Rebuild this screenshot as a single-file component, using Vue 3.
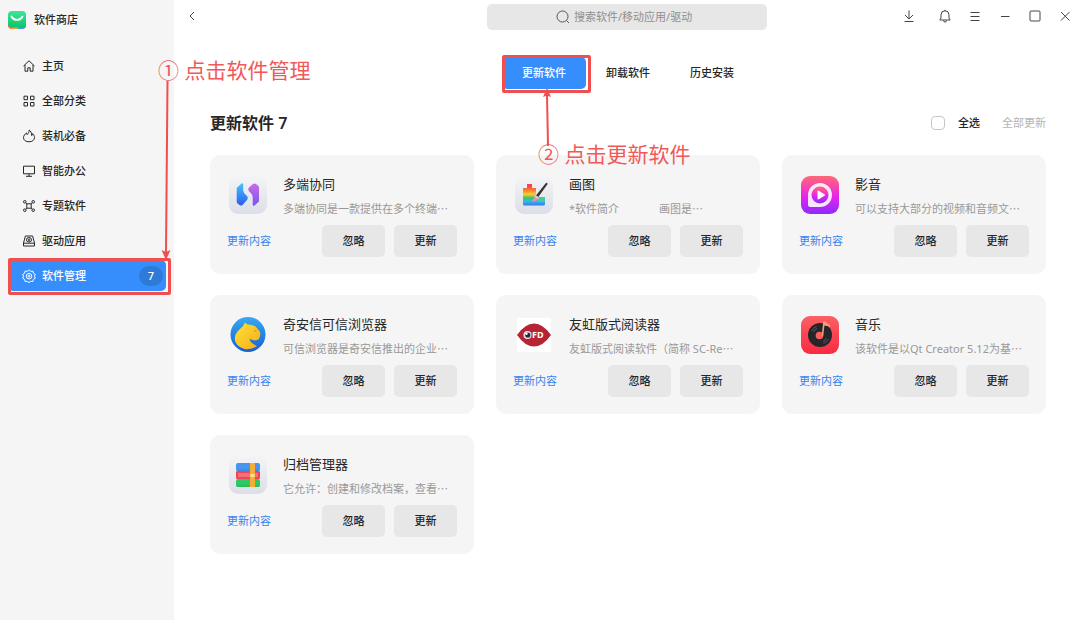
<script setup>
import { ref } from 'vue'

const menu = [
  { name: '主页', icon: 'M1.5 7 7 1.8 12.5 7M3 6v6.2h2.8V8.8h2.4v3.4H11V6' },
  {
    name: '全部分类',
    icon: 'M2 2.2h3.5v3.5H2zM8.5 2.2H12v3.5H8.5zM2 8.5h3.5V12H2zM8.5 8.5H12V12H8.5z'
  },
  {
    name: '装机必备',
    icon: 'M7.2 1c.2 2-1 3.200-2 4.600-.5-.4-.7-1-.6-1.700C2.800 5.200 1.500 6.800 1.500 8.600c0 2.600 2.400 4.200 5.500 4.200s5.500-1.600 5.500-4.200c0-1.700-.8-3-1.800-4-.1.900-.4 1.500-1 2C9.600 4.200 9 2.200 7.200 1z'
  },
  { name: '智能办公', icon: 'M1.500 2.200h11v7.600h-11zM7 9.800v2.400M4 12.300h6' },
  {
    name: '专题软件',
    icon: 'M4.800 4.800h4.400v4.400H4.800zM4.800 4.800l-1-1M9.200 4.800l1-1M4.800 9.200l-1 1M9.200 9.200l1 1M4.100 2.800a1.300 1.300 0 1 1-2.600 0 1.300 1.300 0 0 1 2.600 0M12.500 2.800a1.300 1.300 0 1 1-2.600 0 1.300 1.300 0 0 1 2.600 0M4.100 11.200a1.300 1.300 0 1 1-2.600 0 1.300 1.300 0 0 1 2.600 0M12.500 11.200a1.300 1.300 0 1 1-2.600 0 1.300 1.300 0 0 1 2.600 0'
  },
  {
    name: '驱动应用',
    icon: 'M3.400 2h7.200l1.900 7v3h-11V9zM1.500 9.200h11M9.600 5.800a2.600 2.200 0 1 1-5.200 0 2.600 2.200 0 0 1 5.200 0M7.800 5.800a.8.800 0 1 1-1.600 0 .8.800 0 0 1 1.600 0'
  },
  {
    name: '软件管理',
    icon: 'M7 .8l1.700 1.500 2.200-.2.500 2.100 1.900 1.200L12.500 7.200l.8 2-1.900 1.200-.5 2.100-2.200-.2L7 13.700l-1.700-1.400-2.200.2-.5-2.100L.7 9.200l.8-2-.8-1.800 1.900-1.200.5-2.100 2.200.2zM9.800 7.200a2.800 2.800 0 1 1-5.600 0 2.800 2.800 0 0 1 5.600 0M8 7.200a1 1 0 1 1-2 0 1 1 0 0 1 2 0'
  }
]

const tabs = ['更新软件', '卸载软件', '历史安装']

const apps = [
  { id: 'link', name: '多端协同', desc: '多端协同是一款提供在多个终端' },
  { id: 'paint', name: '画图', desc: '*软件简介              画图是' },
  { id: 'video', name: '影音', desc: '可以支持大部分的视频和音频文' },
  { id: 'browser', name: '奇安信可信浏览器', desc: '可信浏览器是奇安信推出的企业' },
  { id: 'ofd', name: '友虹版式阅读器', desc: '友虹版式阅读软件（简称 SC-Re' },
  { id: 'music', name: '音乐', desc: '该软件是以Qt Creator 5.12为基' },
  { id: 'archive', name: '归档管理器', desc: '它允许：创建和修改档案，查看' }
]

const activeMenu = ref('软件管理')
const activeTab = ref('更新软件')
const keyword = ref('')
const selectAll = ref(false)
</script>

<template>
  <div class="store" lang="zh-CN">
    <aside class="sidebar">
      <div class="brand">
        <svg width="18" height="18" viewBox="0 0 18 18">
          <defs>
            <linearGradient id="bag" x1="0" y1="0" x2="0" y2="1">
              <stop offset="0" stop-color="#3ce69a" />
              <stop offset="1" stop-color="#0cc566" />
            </linearGradient>
            <linearGradient id="rim">
              <stop offset="0" stop-color="#f0564a" />
              <stop offset=".4" stop-color="#f5b52e" />
              <stop offset=".65" stop-color="#38a5f2" />
              <stop offset="1" stop-color="#7a62d8" />
            </linearGradient>
          </defs>
          <rect y="4" width="18" height="14" rx="4" fill="url(#rim)" />
          <rect width="18" height="16.500" rx="4" fill="url(#bag)" />
          <path d="M3.500 5.500c2.500 4.600 8.500 4.600 11 0" fill="none" stroke="#fff" stroke-width="1.800" stroke-linecap="round" />
        </svg>
        <span>软件商店</span>
      </div>
      <nav>
        <ul class="menu">
          <li v-for="item in menu" :key="item.name">
            <button
              class="menu__item"
              :class="{ 'menu__item--active': item.name === activeMenu }"
              @click="activeMenu = item.name"
            >
              <svg class="line-icon" width="14" height="14" viewBox="0 0 14 14">
                <path :d="item.icon" />
              </svg>
              <span>{{ item.name }}</span>
              <span v-if="item.name === '软件管理'" class="badge">{{ apps.length }}</span>
            </button>
            <template v-if="item.name === '软件管理'">
              <span class="mark"></span>
              <svg class="arrow arrow--menu" width="14" height="180" viewBox="0 0 14 180">
                <path d="M7.500 0 6 172" />
                <path class="arrow__head" d="M1.500 169 6 171l4.500-2L6 179z" />
              </svg>
              <span class="callout callout--menu">① 点击软件管理</span>
            </template>
          </li>
        </ul>
      </nav>
    </aside>

    <main class="main">
      <header class="topbar">
        <button class="tool" aria-label="返回">
          <svg class="line-icon" width="14" height="14" viewBox="0 0 14 14"><path d="M9 3 5 7l4 4" /></svg>
        </button>
        <label class="search">
          <svg class="line-icon" width="14" height="14" viewBox="0 0 14 14">
            <circle cx="6.500" cy="6.500" r="5.500" />
            <path d="m10.500 10.500 2.500 2.500" />
          </svg>
          <input v-model="keyword" type="text" placeholder="搜索软件/移动应用/驱动" aria-label="搜索" />
        </label>
        <div class="tools">
          <button class="tool tool--download" aria-label="下载">
            <svg class="line-icon" width="14" height="14" viewBox="0 0 14 14"><path d="M7 1.500v8M3 6l4 4 4-4M2.500 12.500h9" /></svg>
          </button>
          <button class="tool" aria-label="通知">
            <svg class="line-icon" width="14" height="14" viewBox="0 0 14 14">
              <path d="M7 .8V2M1.800 11 3 9V5.800a4 4 0 0 1 8 0V9l1.200 2zM5.500 11.500a1.500 1.500 0 0 0 3 0" />
            </svg>
          </button>
          <button class="tool" aria-label="菜单">
            <svg class="line-icon" width="14" height="14" viewBox="0 0 14 14"><path d="M2.500 3.500h9M2.500 7.500h9M2.500 11.500h9" /></svg>
          </button>
          <button class="tool" aria-label="最小化">
            <svg class="line-icon" width="14" height="14" viewBox="0 0 14 14"><path d="M3 7.500h8.500" /></svg>
          </button>
          <button class="tool" aria-label="最大化">
            <svg class="line-icon" width="14" height="14" viewBox="0 0 14 14"><rect x="2" y="2" width="10" height="10" rx="1" /></svg>
          </button>
          <button class="tool" aria-label="关闭">
            <svg class="line-icon" width="14" height="14" viewBox="0 0 14 14"><path d="m3 3 8.500 8.500M11.500 3 3 11.500" /></svg>
          </button>
        </div>
      </header>

      <div class="content">
        <ul class="tabs">
          <li v-for="tab in tabs" :key="tab">
            <button class="tab" :class="{ 'tab--active': tab === activeTab }" @click="activeTab = tab">
              {{ tab }}
            </button>
            <template v-if="tab === '更新软件'">
              <span class="mark"></span>
              <svg class="arrow arrow--tab" width="14" height="60" viewBox="0 0 14 60">
                <path d="M8 59 7 8" />
                <path class="arrow__head" d="M7 1 3 10l4-1.500 4 1.500z" />
              </svg>
              <span class="callout callout--tab">② 点击更新软件</span>
            </template>
          </li>
        </ul>

        <div class="summary">
          <h1>更新软件 {{ apps.length }}</h1>
          <label class="select-all">
            <input v-model="selectAll" type="checkbox" />
            <span>全选</span>
          </label>
          <button class="update-all" :disabled="!selectAll">全部更新</button>
        </div>

        <div class="cards">
          <article v-for="app in apps" :key="app.id" class="card">
            <div class="card__top">
              <svg v-if="app.id === 'link'" width="42" height="42" viewBox="0 0 42 42">
                <defs>
                  <linearGradient id="tile" x1="0" y1="0" x2="0" y2="1">
                    <stop offset="0" stop-color="#f3f4f6" />
                    <stop offset="1" stop-color="#dcdfe7" />
                  </linearGradient>
                  <linearGradient id="linkBlue" x1="0" y1="0" x2="0" y2="1">
                    <stop offset="0" stop-color="#43c4f8" />
                    <stop offset="1" stop-color="#2c5cf0" />
                  </linearGradient>
                  <linearGradient id="linkPurple" x1="0" y1="0" x2="0" y2="1">
                    <stop offset="0" stop-color="#cb6be8" />
                    <stop offset="1" stop-color="#7955ee" />
                  </linearGradient>
                </defs>
                <rect x="2" y="2" width="38" height="38" rx="9" fill="url(#tile)" />
                <path d="M9.700 14 14 10Q16 8.500 16.200 10.500V16.500Q16.500 19 19 21Q22 23.500 20 26L15.500 31Q14 32.200 12.500 31L10.500 29.500Q9.700 28.700 9.700 27.500z" fill="url(#linkBlue)" />
                <path d="M32 27.500 27.500 31.500Q25.700 32.500 25.700 30.500V23.500Q25.500 20.500 23.500 18.800Q20 16 22 13.500L26 10Q27.500 9 29 10L31 11.500Q32 12.500 32 13.500z" fill="url(#linkPurple)" />
              </svg>

              <svg v-else-if="app.id === 'paint'" width="42" height="42" viewBox="0 0 42 42">
                <defs>
                  <linearGradient id="rainbow" x1="0" y1="0" x2="0" y2="1">
                    <stop offset=".1" stop-color="#f5434d" />
                    <stop offset=".32" stop-color="#fb8a27" />
                    <stop offset=".48" stop-color="#f7cf35" />
                    <stop offset=".65" stop-color="#37c75b" />
                    <stop offset=".8" stop-color="#35b9e8" />
                    <stop offset="1" stop-color="#3a75f4" />
                  </linearGradient>
                </defs>
                <rect x="2" y="2" width="38" height="38" rx="9" fill="url(#tile)" />
                <path d="M14 10h5v4h4v9h9v7q0 1.500-1.500 1.500h-19Q10 31.500 10 30V14h4z" fill="url(#rainbow)" />
                <path d="M23 23h9v5h-7z" fill="#4fd49b" opacity=".6" />
                <path d="m23 21.500 9.500-12q1-1 1.700-.5t.1 1.500l-9 12.500z" fill="#343538" />
                <path d="m21.500 22 3.500 3q-2.500 3.500-6 2 1.800-1 2.500-5z" fill="#e790bb" />
                <path d="m22.500 21 3.500 3-1 1.200-3.500-3z" fill="#d7d4de" />
              </svg>

              <svg v-else-if="app.id === 'video'" width="42" height="42" viewBox="0 0 42 42">
                <defs>
                  <linearGradient id="videoBg" x1="0" y1="0" x2="0" y2="1">
                    <stop offset="0" stop-color="#fd6877" />
                    <stop offset=".25" stop-color="#f94aa5" />
                    <stop offset=".55" stop-color="#e424ee" />
                    <stop offset="1" stop-color="#8c2bfb" />
                  </linearGradient>
                </defs>
                <rect x="2" y="2" width="38" height="38" rx="9" fill="url(#videoBg)" />
                <path d="M21 9a12 12 0 1 1 0 24h-9.500Q9 33 9 30.500V21A12 12 0 0 1 21 9z" fill="#fff" opacity=".88" />
                <circle cx="21" cy="21" r="8.500" fill="url(#videoBg)" />
                <path d="M18.500 17.500q0-1.500 1.300-.8l5.700 3.500q1 .8 0 1.600l-5.700 3.500q-1.300.7-1.300-.8z" fill="#fff" />
              </svg>

              <svg v-else-if="app.id === 'browser'" width="42" height="42" viewBox="0 0 42 42">
                <defs>
                  <linearGradient id="globe" x1="0" y1="0" x2="0" y2="1">
                    <stop offset="0" stop-color="#38a8f2" />
                    <stop offset="1" stop-color="#1560d2" />
                  </linearGradient>
                  <linearGradient id="lion" x1="0" y1="0" x2="1" y2="1">
                    <stop offset="0" stop-color="#ffe33b" />
                    <stop offset="1" stop-color="#f5ab14" />
                  </linearGradient>
                </defs>
                <circle cx="21" cy="20.500" r="17.500" fill="url(#globe)" />
                <path d="M18 8.500 20.500 10.500Q26.500 10 29.500 13.500L33 18Q34 22.500 31.500 25.500L28 26.500 22.500 25Q23 29 30 32Q25 36 17.500 35Q8.500 32.500 7.700 25Q8 19 12.500 15.500Q16.500 12.500 18 8.500z" fill="url(#lion)" />
                <path d="M27 16l3 .8-2 .9z" fill="#c98b10" />
              </svg>

              <svg v-else-if="app.id === 'ofd'" width="42" height="42" viewBox="0 0 42 42">
                <rect x="4" y="4" width="34" height="34" fill="#fff" />
                <path d="M4 21Q12 9.500 21 9.500T38 21q-8 11.500-17 11.500T4 21z" fill="#b72435" />
                <circle cx="14.500" cy="21" r="4" fill="#e5e5e5" />
                <circle cx="14.800" cy="21" r="2.600" fill="#28272b" />
                <circle cx="13.500" cy="19.700" r="1.200" fill="#fff" />
                <text class="ofd-text" x="19" y="24">FD</text>
              </svg>

              <svg v-else-if="app.id === 'music'" width="42" height="42" viewBox="0 0 42 42">
                <defs>
                  <linearGradient id="musicBg" x1="0" y1="0" x2="0" y2="1">
                    <stop offset="0" stop-color="#fb6064" />
                    <stop offset="1" stop-color="#f92a42" />
                  </linearGradient>
                </defs>
                <rect x="2" y="2" width="38" height="38" rx="9" fill="url(#musicBg)" />
                <circle cx="21" cy="21" r="12" fill="#26262a" />
                <path d="M12.500 17a9.500 9.500 0 0 1 5-4.500M14.500 18a7 7 0 0 1 3.500-3.500M29.500 25a9.500 9.500 0 0 1-5 4.500M27.500 24a7 7 0 0 1-3.500 3.500" fill="none" stroke="#626267" stroke-width=".8" />
                <circle cx="20.500" cy="21.500" r="3.800" fill="#fb5c60" />
                <path d="M23.500 21.500 25 8l6 4.500" fill="none" stroke="#f2a078" stroke-width="1.600" stroke-linejoin="round" />
                <path d="m25 8 6.500 4.500-6.800-1z" fill="#f2a078" />
              </svg>

              <svg v-else width="42" height="42" viewBox="0 0 42 42">
                <rect x="2" y="2" width="38" height="38" rx="9" fill="url(#tile)" />
                <rect x="9" y="9" width="24" height="8" rx="2" fill="#4794f1" />
                <rect x="9" y="17" width="24" height="8" rx="1" fill="#ee4659" />
                <rect x="9" y="25" width="24" height="8" rx="2" fill="#2ec866" />
                <path d="M9 16h24M9 32h24" stroke="#000" stroke-opacity=".12" stroke-width="1" />
                <path d="M11 19h20v4H11z" fill="#fb6b7a" />
                <rect x="23" y="9" width="5" height="24" fill="#f6ad37" />
                <path d="M23.500 20h4v3h-4z" fill="#fbe0a0" />
              </svg>

              <div class="card__text">
                <h2>{{ app.name }}</h2>
                <p>{{ app.desc }}<span class="more">…</span></p>
              </div>
            </div>
            <div class="card__actions">
              <a href="#">更新内容</a>
              <button>忽略</button>
              <button>更新</button>
            </div>
          </article>
        </div>
      </div>
    </main>
  </div>
</template>

<style>
body {
  margin: 0;
  background: #fff;
}
</style>

<style scoped>
.store {
  display: flex;
  min-height: 100vh;
  color: #262626;
  font-family: 'Noto Sans', 'Noto Sans CJK SC', sans-serif;
  font-size: 11px;
  line-height: 20px;
}

ul,
h1,
h2,
p {
  margin: 0;
  padding: 0;
  list-style: none;
}

button,
input {
  margin: 0;
  padding: 0;
  border: 0;
  background: none;
  color: inherit;
  font: inherit;
}

button {
  cursor: pointer;
}

svg {
  flex: none;
}

.line-icon {
  fill: none;
  stroke: currentColor;
  stroke-linejoin: round;
}

.sidebar {
  box-sizing: border-box;
  flex: none;
  width: 174px;
  padding: 0 8px;
  background: #f5f5f5;
}

.brand {
  display: flex;
  align-items: center;
  gap: 8px;
  height: 40px;
}

.brand,
.menu__item,
.tab,
.card__actions button,
.select-all {
  font-weight: 500;
}

.menu {
  display: flex;
  flex-direction: column;
  gap: 4px;
  padding-top: 10px;
}

.menu li,
.tabs li {
  position: relative;
}

.menu__item {
  display: flex;
  align-items: center;
  gap: 6px;
  width: 100%;
  height: 31px;
  padding: 0 3px 0 14px;
  border-radius: 5px;
}

.menu__item--active,
.tab--active {
  background: #358efb;
  color: #fff;
}

.badge {
  width: 24px;
  margin-left: auto;
  border-radius: 10px;
  background: #2d7ad9;
}

.mark {
  position: absolute;
  inset: -2px -5px -4px 0;
  border: 3px solid #f04f50;
  border-radius: 2px;
  pointer-events: none;
}

.callout {
  position: absolute;
  z-index: 1;
  color: #f0595a;
  font-size: 21px;
  line-height: 30px;
  white-space: nowrap;
}

.callout--menu {
  top: -205px;
  left: 150px;
}

.callout--tab {
  top: 82px;
  left: 36px;
}

.arrow {
  position: absolute;
  fill: none;
  stroke: #f04f50;
  stroke-width: 2;
  pointer-events: none;
}

.arrow__head {
  fill: #f04f50;
  stroke: none;
}

.arrow--menu {
  top: -179px;
  left: 152px;
}

.arrow--tab {
  top: 30px;
  left: 38px;
}

.main {
  flex: 1;
  min-width: 0;
}

.topbar {
  display: grid;
  grid-template-columns: 1fr 280px 1fr;
  height: 34px;
}

.tool {
  display: flex;
  align-items: center;
  justify-content: center;
  width: 30px;
  height: 32px;
  color: #444;
}

.topbar > .tool {
  margin-left: 3px;
}

.tools {
  display: flex;
  justify-content: flex-end;
}

.tool--download {
  margin-right: 6px;
}

.search {
  display: flex;
  align-items: center;
  justify-content: center;
  gap: 4px;
  height: 26px;
  margin-top: 4px;
  border-radius: 5px;
  background: #e7e7e7;
  color: #555;
}

.search input {
  width: 124px;
  outline: none;
}

.search input::placeholder {
  color: #8f8f8f;
}

.content {
  padding: 23px 34px 34px 36px;
}

.tabs {
  display: flex;
  justify-content: center;
}

.tab {
  width: 84px;
  height: 32px;
  border-radius: 5px;
}

.summary {
  display: flex;
  align-items: center;
  height: 32px;
  margin: 18px 0 16px;
}

h1 {
  flex: 1;
  font-size: 16px;
  font-weight: 600;
}

.select-all {
  display: flex;
  align-items: center;
  gap: 13px;
}

.select-all input {
  appearance: none;
  width: 14px;
  height: 14px;
  border: 1px solid #c6c6c6;
  border-radius: 4px;
  background: #fff;
}

.select-all input:checked {
  background: #358efb;
}

.update-all {
  margin-left: 22px;
  color: #b4b4b4;
}

.cards {
  display: grid;
  grid-template-columns: repeat(3, minmax(0, 1fr));
  gap: 21px 22px;
}

.card {
  padding: 19px 17px 17px;
  border-radius: 10px;
  background: #f5f5f5;
}

.card__top {
  display: flex;
  gap: 14px;
}

.card__text {
  min-width: 0;
}

h2 {
  margin-bottom: 4px;
  font-size: 13px;
  font-weight: 400;
}

p {
  overflow: hidden;
  height: 20px;
  color: #999;
  white-space: pre;
}

.more {
  display: inline-block;
  font-family: 'Noto Sans CJK SC', sans-serif;
}

.card__actions {
  display: flex;
  align-items: center;
  gap: 9px;
  margin-top: 7px;
}

.card__actions a {
  margin-right: auto;
  color: #3585ef;
  text-decoration: none;
}

.card__actions button {
  width: 63px;
  height: 32px;
  border-radius: 5px;
  background: #e7e7e7;
}

.ofd-text {
  fill: #fff;
  font-family: 'Noto Sans', sans-serif;
  font-size: 9px;
  font-weight: 700;
}
</style>
